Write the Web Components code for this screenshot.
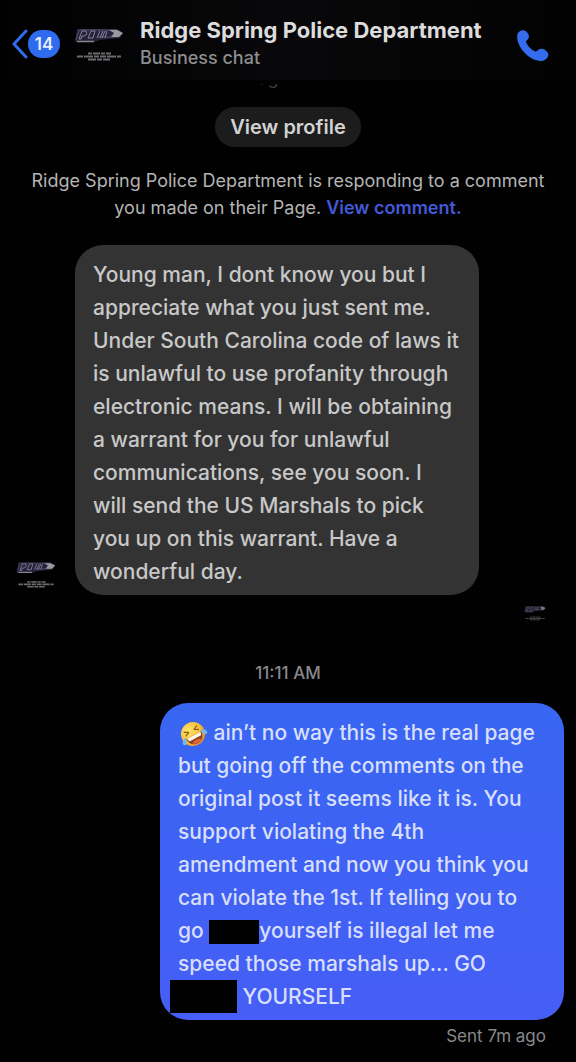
<!DOCTYPE html>
<html lang="en">
<head>
<meta charset="utf-8">
<meta name="viewport" content="width=device-width, initial-scale=1">
<title>Ridge Spring Police Department</title>
<style>
  html{ background:#000; }
  body{
    margin:0; background:#000; color:#d0d0d0;
    font-family:Inter,"Liberation Sans",sans-serif;
  }
</style>
</head>
<body>
<chat-screen>
  <chat-header slot="header" name="Ridge Spring Police Department" kind="Business chat" unread="14"></chat-header>
  <chat-intro>
    <span slot="stats">Follow Page</span>
    <span slot="stats">like</span>
    Ridge Spring Police Department is responding to a comment you made on their Page.
    <a slot="link" href="#comment">View comment.</a>
  </chat-intro>
  <chat-message from="them">Young man, I dont know you but I appreciate what you just sent me. Under South Carolina code of laws it is unlawful to use profanity through electronic means. I will be obtaining a warrant for you for unlawful communications, see you soon. I will&nbsp;send the US Marshals to pick you up on this warrant. Have a wonderful day.</chat-message>
  <chat-seen></chat-seen>
  <chat-time>11:11 AM</chat-time>
  <chat-message from="me"><laughing-face></laughing-face> ain’t no way this is the real page but going off the comments on the original post it seems like it is. You support violating the 4th amendment and now you think you can violate the 1st. If telling you to go <redacted-word></redacted-word>yourself is illegal let me speed those marshals up... GO <redacted-word size="large"></redacted-word> YOURSELF<span slot="status">Sent 7m ago</span></chat-message>
</chat-screen>

<script>
(() => {
  'use strict';

  class ChatScreen extends HTMLElement {
    constructor() {
      super();
      this.attachShadow({ mode: 'open' }).innerHTML = `
        <style>
          :host{ display:flex; flex-direction:column; min-height:100vh; background:#010101; }
          main{ display:flex; flex-direction:column; }
        </style>
        <slot name="header"></slot>
        <main><slot></slot></main>
      `;
    }
  }

  class ChatHeader extends HTMLElement {
    constructor() {
      super();
      this.attachShadow({ mode: 'open' }).innerHTML = `
        <style>
          :host{ display:block; }
          header{
            display:flex; align-items:center; height:80px; padding:8px 24px 0 12px;
            box-sizing:border-box; background:linear-gradient(90deg,#010102,#08080a 50%,#020203);
          }
          .back{ display:flex; align-items:center; text-decoration:none; }
          .back svg{ display:block; width:16px; height:32px; }
          .badge{
            min-width:32px; height:28px; border-radius:14px; background:#2f6bed; color:#e8efff;
            font-size:17px; font-weight:600; line-height:28px; text-align:center;
          }
          page-logo{ width:50px; margin-left:14px; }
          .who{ flex:1; margin-left:16px; min-width:0; }
          h1{ margin:0; font-size:22px; line-height:28px; font-weight:700; color:#dcdcdc; white-space:nowrap; }
          p{ margin:0; font-size:18px; line-height:28px; font-weight:500; color:#8d8d8f; }
          button{ display:block; padding:0; border:0; background:none; cursor:pointer; }
          button svg{ display:block; width:36px; height:36px; }
        </style>
        <header>
          <a class="back" href="#inbox" aria-label="Back to inbox">
            <svg viewBox="0 0 16 32" fill="none" stroke="#2f6bed" stroke-width="3" stroke-linecap="round" stroke-linejoin="round"><path d="M14 3 2 16l12 13"/></svg>
            <span class="badge"></span>
          </a>
          <page-logo></page-logo>
          <div class="who"><h1></h1><p></p></div>
          <button type="button" aria-label="Call">
            <svg viewBox="0 0 36 36" fill="#346cee"><path d="M1.300 9.200C1.600 6.300 4.500 4.200 7.400 4.300c2.400.2 5 3 5.500 5.300.4 2-.5 3.400-2 4.600-.8.700-1 1.500-.6 2.500 1.800 3.700 4.800 6.700 8.600 8.500 1 .4 1.800.2 2.600-.6 1.400-1.500 3.300-2.300 5.400-1.600 2.500.8 5.400 3.200 5.500 5.200.1 2.900-2.500 5.800-5.700 6.500-3 .7-6.900-.3-10.300-2C9.700 29.400 4.600 23.300 2.200 16.600 1.400 14.100 1 11.700 1.300 9.200Z"/></svg>
          </button>
        </header>
      `;
    }

    connectedCallback() {
      const $ = (s) => this.shadowRoot.querySelector(s);
      $('.badge').textContent = this.getAttribute('unread');
      $('h1').textContent = this.getAttribute('name');
      $('p').textContent = this.getAttribute('kind');
    }
  }

  // Department logo: slanted word mark over lines of small print
  class PageLogo extends HTMLElement {
    constructor() {
      super();
      this.attachShadow({ mode: 'open' }).innerHTML = `
        <style>
          :host{ display:block; }
          svg{ display:block; width:100%; }
        </style>
        <svg viewBox="0 0 50 36" aria-hidden="true">
          <path d="M3 3h39l7 4-3 5-20 2-6 2H1Z" fill="#25223a"/>
          <path d="M2 14 5 4h38l5 3-4 4H24" fill="none" stroke="#565169" stroke-width="1"/>
          <path d="M35 4h8l6 3-4 4h-8l3-4Z" fill="#98989f"/>
          <path d="m5 13 3-8h4l1 3-3 2H8l-1 3Zm9-1 3-7h4l-2 7Zm9 0 3-7m3 0-3 7m5-7-3 7m5-7-2 7" fill="none" stroke="#8a849f" stroke-width="1"/>
          <path d="M3 15.500h17" stroke="#85858d" stroke-width="1.500"/>
          <g fill="none" stroke="#6c6c70" stroke-width="2">
            <path d="M14 27.500h23" stroke-dasharray="4 1 7 1"/>
            <path d="M3 30.500h44" stroke-dasharray="6 1 9 1 5 1"/>
            <path d="M14 33.500h22" stroke-dasharray="8 1 5 1"/>
          </g>
        </svg>
      `;
    }
  }

  class ChatIntro extends HTMLElement {
    constructor() {
      super();
      this.attachShadow({ mode: 'open' }).innerHTML = `
        <style>
          :host{ display:flex; flex-direction:column; align-items:center; padding:4px 28px 0; }
          /* line scrolled most of the way under the header */
          .stats{
            display:flex; align-items:flex-end; gap:40px; height:4px; margin-right:32px; overflow:hidden;
            font-size:18px; line-height:20px; color:#3a3a3d;
          }
          button{
            height:40px; margin-top:19px; padding:0 15px; border:0; border-radius:20px;
            background:#1c1c1c; color:#d2d2d2; font:600 20px/40px Inter,"Liberation Sans",sans-serif; cursor:pointer;
          }
          p{ margin:20px 0 0; font-size:18px; line-height:27px; text-align:center; color:#b4b4b4; }
          ::slotted(a){ color:#4458d8; font-weight:600; text-decoration:none; }
        </style>
        <div class="stats"><slot name="stats"></slot></div>
        <button type="button">View profile</button>
        <p><slot></slot><slot name="link"></slot></p>
      `;
    }
  }

  class ChatMessage extends HTMLElement {
    constructor() {
      super();
      this.attachShadow({ mode: 'open' }).innerHTML = `
        <style>
          :host{ display:flex; flex-direction:column; padding:0 12px 0 16px; }
          .row{ display:flex; align-items:flex-end; gap:19px; }
          page-logo{ flex:none; width:40px; margin-bottom:6px; }
          .bubble{
            box-sizing:border-box; width:404px; max-width:80%; padding:13px 16px 7px 18px;
            border-radius:28px; background:#333; color:#c8c8c8;
            font-size:21px; line-height:33px; font-weight:500;
          }
          :host([from="them"]){ margin-top:24px; }
          :host([from="me"]){ margin-top:18px; }
          :host([from="me"]) .row{ justify-content:flex-end; }
          :host([from="me"]) .bubble{ background:linear-gradient(#3866f2,#465ef6); color:#d8dffc; }
          :host([from="me"]) page-logo{ display:none; }
          .status{ padding:4px 18px 0 0; text-align:right; font-size:17px; line-height:24px; color:#88888b; }
          :host([from="them"]) .status{ display:none; }
        </style>
        <div class="row">
          <page-logo></page-logo>
          <div class="bubble"><slot></slot></div>
        </div>
        <div class="status"><slot name="status"></slot></div>
      `;
    }
  }

  class ChatSeen extends HTMLElement {
    constructor() {
      super();
      this.attachShadow({ mode: 'open' }).innerHTML = `
        <style>
          :host{ display:flex; justify-content:flex-end; padding:10px 30px 0 0; }
          page-logo{ width:22px; opacity:.8; }
        </style>
        <page-logo></page-logo>
      `;
    }
  }

  class ChatTime extends HTMLElement {
    constructor() {
      super();
      this.attachShadow({ mode: 'open' }).innerHTML = `
        <style>
          :host{ display:block; margin-top:40px; text-align:center; font-size:17px; line-height:24px; font-weight:500; color:#88888b; }
        </style>
        <slot></slot>
      `;
    }
  }

  class RedactedWord extends HTMLElement {
    constructor() {
      super();
      this.attachShadow({ mode: 'open' }).innerHTML = `
        <style>
          :host{ display:inline-block; width:50px; height:24px; background:#000; vertical-align:middle; }
          :host([size="large"]){ width:67px; height:33px; margin-left:-8px; vertical-align:top; }
        </style>
      `;
    }
  }

  class LaughingFace extends HTMLElement {
    constructor() {
      super();
      this.attachShadow({ mode: 'open' }).innerHTML = `
        <style>
          :host{ display:inline-block; width:30px; height:28px; vertical-align:middle; }
          svg{ display:block; width:100%; height:100%; }
        </style>
        <svg viewBox="0 0 28 28" role="img" aria-label="rolling on the floor laughing">
          <defs>
            <radialGradient id="skin" cx=".4" cy=".3" r=".8">
              <stop offset="0" stop-color="#ffe76a"/><stop offset=".6" stop-color="#f7bd3a"/><stop offset="1" stop-color="#dd7e22"/>
            </radialGradient>
          </defs>
          <g transform="rotate(-28 14 14)">
            <circle cx="14" cy="14" r="12" fill="url(#skin)"/>
            <path d="M7 8.500 11 10.500 7 12.500M21 8.500 17 10.500l4 2" fill="none" stroke="#8a5a18" stroke-width="1.200" stroke-linecap="round" stroke-linejoin="round"/>
            <path d="M5.500 15.500h17c0 5-3.500 9-8.500 9s-8.500-4-8.500-9Z" fill="#80451a"/>
            <path d="M6.500 15.500h15c0 2-.8 3.500-1.500 3.500H8c-.8 0-1.500-1.500-1.500-3.500Z" fill="#fff6df"/>
            <path d="M9 22c2-2 8-2 10 0-2.500 3-7.500 3-10 0Z" fill="#e2603c"/>
            <path d="M5.500 14C2 14.500-.5 17 .8 19.500c1.600 2 5-.5 4.700-5.500ZM22.500 14c3.500.5 6 3 4.700 5.500-1.600 2-5-.5-4.700-5.500Z" fill="#75b8e8"/>
          </g>
        </svg>
      `;
    }
  }

  customElements.define('page-logo', PageLogo);
  customElements.define('laughing-face', LaughingFace);
  customElements.define('redacted-word', RedactedWord);
  customElements.define('chat-header', ChatHeader);
  customElements.define('chat-intro', ChatIntro);
  customElements.define('chat-message', ChatMessage);
  customElements.define('chat-seen', ChatSeen);
  customElements.define('chat-time', ChatTime);
  customElements.define('chat-screen', ChatScreen);
})();
</script>
</body>
</html>
